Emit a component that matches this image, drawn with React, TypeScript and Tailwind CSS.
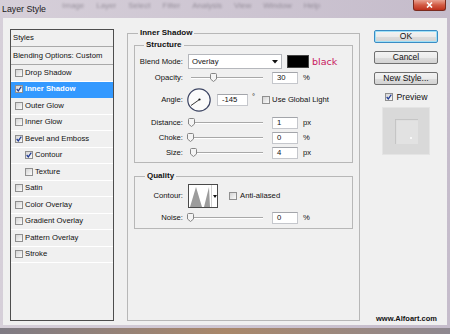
import React from "react";

function Check({ checked = false }: { checked?: boolean }) {
  return (
    <span className="w-[8px] h-[8px] shrink-0 border border-[#8f8f8f] bg-linear-to-br from-[#d4d4d4] to-[#fbfbfb] flex items-center justify-center">
      {checked && (
        <svg width="6" height="6" viewBox="0 0 6 6">
          <path d="M0.7 3 L2.3 4.9 L5.3 0.7" stroke="#1f3a93" strokeWidth="1.2" fill="none" />
        </svg>
      )}
    </span>
  );
}

function Slider({ pos }: { pos: number }) {
  return (
    <div className="relative w-[79px] h-[13px] flex items-center">
      <div className="ml-[3px] w-[72px] h-[2px] border-t border-t-[#a8a8a8] border-b border-b-white" />
      <svg className="absolute top-[2px]" style={{ left: pos }} width="7" height="9" viewBox="0 0 7 9">
        <path d="M0.5 1.5 Q0.5 0.5 1.5 0.5 H5.5 Q6.5 0.5 6.5 1.5 V6 L3.5 8.5 L0.5 6 Z" fill="#f4f4f4" stroke="#858585" />
      </svg>
    </div>
  );
}

function Num({ v, cls }: { v: string; cls: string }) {
  return (
    <div className={cls + " bg-white border border-[#c5c7cc] border-t-[#a3a5aa] flex items-center pl-[4px] text-[7.7px] leading-none"}>
      {v}
    </div>
  );
}

function SliderRow({ label, pos, v, unit }: { label: string; pos: number; v: string; unit: string }) {
  return (
    <div className="flex items-center h-[13px]">
      <span className="w-[48px] text-right">{label}</span>
      <div className="ml-[5px]">
        <Slider pos={pos} />
      </div>
      <div className="ml-[5px]">
        <Num v={v} cls="w-[26px] h-[12px]" />
      </div>
      <span className="ml-[5px]">{unit}</span>
    </div>
  );
}

function ListRow({ label, checked, sel, indent }: { label: string; checked?: boolean; sel?: boolean; indent?: boolean }) {
  return (
    <div
      className={
        "h-[16.5px] shrink-0 flex items-center border-b " +
        (sel ? "bg-[#3399ff] text-white font-bold border-[#3399ff] " : "border-white ") +
        (indent ? "pl-[14px]" : "pl-[4px]")
      }
    >
      <Check checked={checked} />
      <span className="ml-[2px]">{label}</span>
    </div>
  );
}

function Btn({ children, def }: { children: React.ReactNode; def?: boolean }) {
  return (
    <div
      className={
        "w-[64px] h-[13px] rounded-[2px] border flex items-center justify-center text-[8.5px] leading-none text-[#111] bg-[linear-gradient(#f3f3f3_0%,#ebebeb_50%,#dddddd_50%,#d3d3d3_100%)] " +
        (def ? "border-[#3a8cc4] shadow-[inset_0_0_0_1px_#9fe0f7]" : "border-[#707070]")
      }
    >
      {children}
    </div>
  );
}

export default function App() {
  return (
    <div className="w-[450px] h-[334px] overflow-hidden flex flex-col font-['Liberation_Sans',Arial,sans-serif] text-[#111] bg-[#8a8590]">
      {/* window */}
      <div className="h-[328px] shrink-0 flex flex-col bg-linear-to-r from-[#d6cfd9] to-[#c5bccb] px-[3px] pb-[3px]">
        {/* title bar */}
        <div className="h-[18px] -mx-[3px] flex items-center">
          <span className="ml-[2px] text-[8.8px] text-[#1a1a1a] leading-none">Layer Style</span>
          <div className="self-start mt-[1px] ml-[16px] flex gap-[12px] text-[8px] leading-[9px] text-[#3a3440] blur-[1.2px] opacity-40">
            <span>Image</span>
            <span>Layer</span>
            <span>Select</span>
            <span>Filter</span>
            <span>Analysis</span>
            <span>View</span>
            <span>Window</span>
            <span>Help</span>
          </div>
          <div className="ml-auto mr-[4px] self-start w-[33px] h-[11px] rounded-b-[3px] border border-t-0 border-[#7a2a1e] bg-linear-to-b from-[#e8a292] via-[#d25a44] to-[#bd2f1b] flex items-center justify-center">
            <svg width="7" height="6" viewBox="0 0 7 6">
              <path d="M1 0.5 L6 5.5 M6 0.5 L1 5.5" stroke="white" strokeWidth="1.6" />
            </svg>
          </div>
        </div>

        {/* client */}
        <div className="flex-1 bg-[#f0f0f0] flex items-start pt-[10px] pl-[7px] text-[7.7px] leading-none">
          {/* left list */}
          <div className="mt-[1px] w-[104px] h-[292px] border border-[#4d4d4d] flex flex-col">
            <div className="h-[17px] shrink-0 flex items-center pl-[2px] border-b border-[#a9a9a9]">Styles</div>
            <div className="h-[18px] shrink-0 flex items-center pl-[2px] border-b border-[#a9a9a9]">Blending Options: Custom</div>
            <ListRow label="Drop Shadow" />
            <ListRow label="Inner Shadow" checked sel />
            <ListRow label="Outer Glow" />
            <ListRow label="Inner Glow" />
            <ListRow label="Bevel and Emboss" checked />
            <ListRow label="Contour" checked indent />
            <ListRow label="Texture" indent />
            <ListRow label="Satin" />
            <ListRow label="Color Overlay" />
            <ListRow label="Gradient Overlay" />
            <ListRow label="Pattern Overlay" />
            <ListRow label="Stroke" />
          </div>

          {/* middle */}
          <fieldset className="ml-[13px] w-[233px] h-[293px] border border-[#b7b7b7] px-[6px] min-w-0">
            <legend className="ml-[4px] px-[2px] font-bold text-[8px] leading-[10px]">Inner Shadow</legend>

            <fieldset className="mt-[2px] border border-[#b7b7b7] pt-[4px] pb-[3px] flex flex-col min-w-0">
              <legend className="ml-[9px] px-[2px] font-bold text-[8px] leading-[10px]">Structure</legend>
              <div className="flex flex-col">
                <div className="flex items-center h-[15px]">
                  <span className="w-[48px] text-right">Blend Mode:</span>
                  <div className="ml-[5px] w-[94px] h-[15px] bg-white border border-[#b5b7bc] flex items-center pl-[3px] pr-[3px]">
                    <span>Overlay</span>
                    <svg className="ml-auto" width="6" height="4" viewBox="0 0 6 4">
                      <path d="M0 0 H6 L3 3.5 Z" fill="#111" />
                    </svg>
                  </div>
                  <div className="ml-[5px] w-[22px] h-[13px] bg-black border border-[#444]" />
                  <span className="ml-[3px] font-['DejaVu_Sans',sans-serif] text-[9.5px] text-[#c8175d] leading-none">black</span>
                </div>
                <div className="mt-[2px]">
                  <SliderRow label="Opacity:" pos={22} v="30" unit="%" />
                </div>
                <div className="mt-[3px] flex items-center h-[26px]">
                  <span className="w-[48px] text-right">Angle:</span>
                  <svg className="ml-[4px]" width="24" height="24" viewBox="0 0 24 24">
                    <circle cx="12" cy="12" r="11.2" fill="#fbfbfb" stroke="#3d4563" strokeWidth="1.2" />
                    <line x1="12.5" y1="11.5" x2="4" y2="17.5" stroke="#222" strokeWidth="0.9" />
                    <circle cx="12.5" cy="11.5" r="1.1" fill="#111" />
                  </svg>
                  <div className="ml-[6px]">
                    <Num v="-145" cls="w-[31px] h-[12px]" />
                  </div>
                  <span className="ml-[4px] self-center -mt-[6px]">°</span>
                  <div className="ml-[7px]">
                    <Check />
                  </div>
                  <span className="ml-[2px]">Use Global Light</span>
                </div>
                <div className="mt-[3px]">
                  <SliderRow label="Distance:" pos={0} v="1" unit="px" />
                </div>
                <div className="mt-[2px]">
                  <SliderRow label="Choke:" pos={-1} v="0" unit="%" />
                </div>
                <div className="mt-[2px]">
                  <SliderRow label="Size:" pos={2} v="4" unit="px" />
                </div>
              </div>
            </fieldset>

            <fieldset className="mt-[8px] border border-[#b7b7b7] pt-[3px] pb-[4px] flex flex-col min-w-0">
              <legend className="ml-[10px] px-[2px] font-bold text-[8px] leading-[10px]">Quality</legend>
              <div className="flex items-center h-[24px]">
                <span className="w-[48px] text-right">Contour:</span>
                <div className="ml-[5px] w-[30px] h-[24px] bg-white border border-[#4a4a4a] flex">
                  <svg width="22" height="22" viewBox="0 0 22 22">
                    <polygon points="1,22 7,2 13,22 15,22 20,2 21,22" fill="#9c9c9c" />
                  </svg>
                  <div className="flex-1 border-l border-[#d0d0d0] flex items-center justify-center">
                    <svg width="4" height="3" viewBox="0 0 4 3">
                      <path d="M0 0 H4 L2 3 Z" fill="#111" />
                    </svg>
                  </div>
                </div>
                <div className="ml-[11px]">
                  <Check />
                </div>
                <span className="ml-[3px]">Anti-aliased</span>
              </div>
              <div className="mt-[3px]">
                <SliderRow label="Noise:" pos={-1} v="0" unit="%" />
              </div>
            </fieldset>
          </fieldset>

          {/* right column */}
          <div className="ml-[14px] mt-[2px] w-[64px] h-[293px] flex flex-col items-center">
            <Btn def>OK</Btn>
            <div className="mt-[8px]">
              <Btn>Cancel</Btn>
            </div>
            <div className="mt-[8px]">
              <Btn>New Style...</Btn>
            </div>
            <div className="mt-[7px] h-[10px] flex items-center">
              <Check checked />
              <span className="ml-[4px] text-[8.7px]">Preview</span>
            </div>
            <div className="mt-[5px] w-[48px] h-[48px] bg-[#d9d9d9] border border-[#e4e4e4] flex items-center justify-center">
              <div className="w-[23px] h-[25px] bg-[#e2e2e2] shadow-[inset_1px_1px_1px_#c2c2c2] flex items-end justify-end pr-[6px] pb-[5px]">
                <div className="w-[2px] h-[2px] rounded-full bg-white" />
              </div>
            </div>
            <div className="mt-auto self-end pr-[1px] text-[7.5px] font-bold leading-[9px] text-[#111]">www.Alfoart.com</div>
          </div>
        </div>
      </div>
      {/* desktop below */}
      <div className="flex-1 bg-linear-to-r from-[#7f7b84] via-[#a98769] to-[#8e8890]" />
    </div>
  );
}
